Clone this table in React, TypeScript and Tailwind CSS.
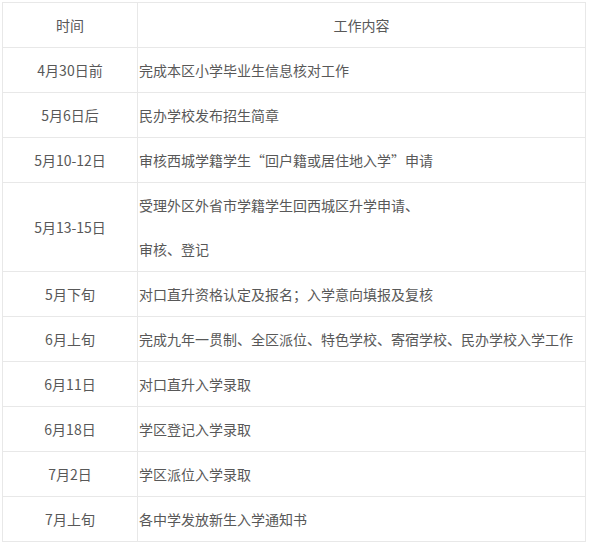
import React from 'react';

const rows: { time: string; lines: string[] }[] = [
  { time: '4月30日前', lines: ['完成本区小学毕业生信息核对工作'] },
  { time: '5月6日后', lines: ['民办学校发布招生简章'] },
  { time: '5月10-12日', lines: ['审核西城学籍学生“回户籍或居住地入学”申请'] },
  { time: '5月13-15日', lines: ['受理外区外省市学籍学生回西城区升学申请、', '审核、登记'] },
  { time: '5月下旬', lines: ['对口直升资格认定及报名；入学意向填报及复核'] },
  { time: '6月上旬', lines: ['完成九年一贯制、全区派位、特色学校、寄宿学校、民办学校入学工作'] },
  { time: '6月11日', lines: ['对口直升入学录取'] },
  { time: '6月18日', lines: ['学区登记入学录取'] },
  { time: '7月2日', lines: ['学区派位入学录取'] },
  { time: '7月上旬', lines: ['各中学发放新生入学通知书'] },
];

export default function App() {
  return (
    <div className="w-[593px] h-[544px] bg-white pt-[2px] pl-[2px] font-['Noto_Sans_CJK_SC','Noto_Sans',sans-serif] text-[14px] text-[#585858]">
      <div className="w-[584px] border-t border-l border-[#e8e8e8]">
        {/* header */}
        <div className="flex h-[45px] border-b border-[#e8e8e8]">
          <div className="w-[135px] flex items-center justify-center border-r border-[#e8e8e8]">时间</div>
          <div className="w-[448px] flex items-center justify-center border-r border-[#e8e8e8]">工作内容</div>
        </div>
        {rows.map((r) => (
          <div
            key={r.time}
            className={`flex border-b border-[#e8e8e8] ${r.lines.length > 1 ? 'h-[89px]' : 'h-[45px]'}`}
          >
            <div className="w-[135px] flex items-center justify-center border-r border-[#e8e8e8]">{r.time}</div>
            <div className="w-[448px] flex flex-col justify-center pl-[1px] border-r border-[#e8e8e8]">
              {r.lines.map((l) => (
                <div key={l} className="leading-[44px] whitespace-nowrap">
                  {l}
                </div>
              ))}
            </div>
          </div>
        ))}
      </div>
    </div>
  );
}
